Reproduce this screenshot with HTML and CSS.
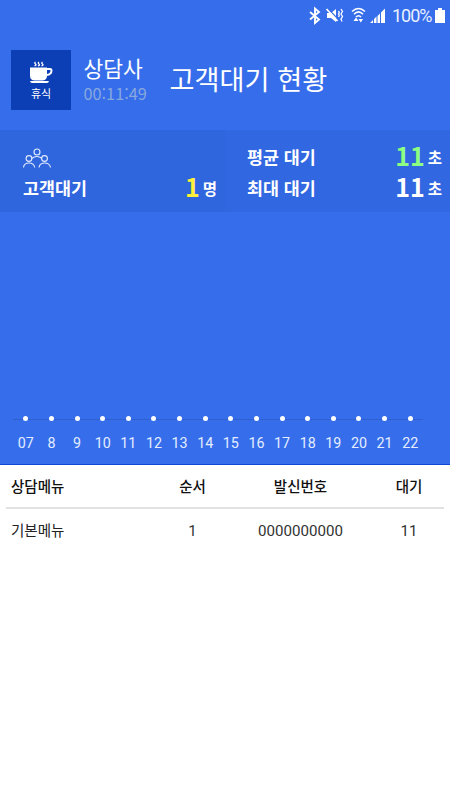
FILE: index.html
```html
<!DOCTYPE html>
<html lang="ko">
<head>
<meta charset="utf-8">
<title>고객대기 현황</title>
<link rel="stylesheet" href="styles.css">
</head>
<body>
<div class="statusbar">
  <svg class="status-icons" width="86" height="32" viewBox="0 0 86 32" fill="none" stroke="#fff">
    <path d="M2 12l9 7.500-4 3.500V8.500l4 3.500-9 7.500" stroke-width="1.900"/>
    <path d="M19 13h4l5-4v13l-5-4h-4z" fill="#fff" stroke="none"/>
    <path d="M19.500 8.500l12 12" stroke="#366dea" stroke-width="1.300"/>
    <path d="M18.500 9l11 12" stroke-width="1.800"/>
    <path d="M33 9l1.500 2.500-1.500 2.500 1.500 2.500-1.500 2.500 1 2.500M30.500 11l.8 1.500-.8 1.500.8 1.500-.8 1.500" stroke-width="1.300"/>
    <path d="M44 11.500q6.500-6 13 0M46 14.200q4.500-4.500 9 0M48 17q2.500-2.500 5 0" stroke-width="1.600"/>
    <path d="M45.500 21l2.500-3.500 2.500 3.500zM50.500 19h4.500l-2.200 3.500z" fill="#fff" stroke="none"/>
    <path d="M62 23l3-3v3zM66 23v-4l2.500-2.500V23zM69.500 23v-7l2.500-2.500V23zM73 23V12.500l4-4V23z" fill="#fff" stroke="none"/>
  </svg>
  <span class="percent">100%</span>
  <svg class="battery" width="10" height="15" viewBox="0 0 10 15"><path d="M3 0h4v2h3v13H0V2h3z" fill="#fff"/></svg>
</div>

<header class="header">
  <div class="rest">
    <svg width="24" height="23" viewBox="0 0 24 23" fill="none" stroke="#fff">
      <path d="M6.500 1q-1.500 1 0 2t-1 2M10 1q-1.500 1 0 2t-1 2M13.500 1q-1.500 1 0 2t-1 2" stroke-width="1.300"/>
      <path d="M1 6.500h17v8q0 5-5 5H6q-5 0-5-5zM1 20h19q-.5 2-2 2H3q-1.500 0-2-2z" fill="#fff" stroke="none"/>
      <path d="M17.500 8h3.500q1.500 0 1.500 1.500 0 4-5 4.500" stroke-width="2"/>
    </svg>
    <span>휴식</span>
  </div>
  <div class="agent">
    <div class="agent-name">상담사</div>
    <div class="agent-time">00:11:49</div>
  </div>
  <h1 class="title">고객대기 현황</h1>
</header>

<section class="summary">
  <div class="waiting">
    <svg width="28" height="20" viewBox="0 0 28 20" fill="none" stroke="#e3edff" stroke-width="1.100">
      <circle cx="14" cy="4" r="3"/><circle cx="6" cy="10.500" r="2.900"/><circle cx="21.500" cy="10.500" r="2.900"/>
      <path d="M8.500 10.500q5.500-4 10.500 0M.500 19.500q.500-4.500 5.500-4.500t5.700 4.500M16 19.500q.700-4.500 5.700-4.500T27.500 19.500"/>
    </svg>
    <div class="stat"><span>고객대기</span><span class="amount"><b class="yellow">1</b><span class="unit">명</span></span></div>
  </div>
  <div class="times">
    <div class="stat"><span>평균 대기</span><span class="amount"><b class="green">11</b><span class="unit">초</span></span></div>
    <div class="stat"><span>최대 대기</span><span class="amount"><b>11</b><span class="unit">초</span></span></div>
  </div>
</section>

<section class="chart">
  <div class="axis">
    <span>07</span><span>8</span><span>9</span><span>10</span><span>11</span><span>12</span><span>13</span><span>14</span><span>15</span><span>16</span><span>17</span><span>18</span><span>19</span><span>20</span><span>21</span><span>22</span>
  </div>
</section>

<section class="table">
  <div class="row head"><span>상담메뉴</span><span>순서</span><span>발신번호</span><span>대기</span></div>
  <div class="row"><span>기본메뉴</span><span class="num">1</span><span class="num">0000000000</span><span class="num">11</span></div>
</section>
</body>
</html>
```
FILE: styles.css
```css
* { box-sizing: border-box; }
body {
  margin: 0;
  width: 450px;
  height: 800px;
  overflow: hidden;
  background: #fff;
  color: #fff;
  font-family: "Noto Sans CJK KR", sans-serif;
}
.statusbar {
  display: flex;
  height: 32px;
  padding-left: 308px;
  background: #366dea;
}
.status-icons { flex: none; width: 86px; margin-right: -3px; }
.percent {
  width: 43px;
  padding-left: 1px;
  font: 18px/32px Roboto, sans-serif;
  letter-spacing: -1px;
  color: #e9f0ff;
}
.battery { flex: none; margin: 8px 0 0 1px; }
.header {
  display: flex;
  height: 98px;
  padding: 18px 0 0 11px;
  background: #366dea;
}
.rest {
  display: flex;
  flex-direction: column;
  align-items: center;
  width: 60px;
  height: 60px;
  padding-top: 11px;
  background: #0c3eb5;
  font-size: 11px;
  line-height: 18px;
}
.agent { width: 86px; margin-left: 12.500px; }
.agent-name { font-size: 21.5px; line-height: 32px; margin-top: 2px; }
.agent-time { font-size: 16.3px; line-height: 18px; color: #86a8de; }
.title {
  margin: 0;
  font-size: 27.2px;
  line-height: 56px;
  font-weight: 400;
}
.summary {
  display: flex;
  height: 82px;
  background: #3167e0;
  font-size: 17.4px;
  font-weight: 700;
}
.waiting { width: 225px; padding: 18px 8px 0 23px; background: #2f65dd; }
.waiting svg { display: block; }
.waiting .stat { margin-top: 4px; }
.times { flex: 1; padding: 11px 8px 0 22px; }
.stat {
  display: flex;
  justify-content: space-between;
  height: 31px;
  line-height: 31px;
}
.amount { display: flex; font-size: 15.5px; }
.amount b { margin-right: 3px; font-size: 25px; line-height: 28px; font-weight: 700; }
.unit { line-height: 33px; }
.yellow { color: #fff03c; }
.green { color: #8dff83; }
.chart {
  display: flex;
  align-items: flex-end;
  height: 253px;
  padding: 0 27px 12px 13px;
  background: #366dea;
  border-bottom: 1px solid #0d48d5;
}
.axis {
  display: grid;
  grid-template-columns: repeat(16, 1fr);
  width: 410px;
  height: 36px;
  background: linear-gradient(#315fd0, #315fd0) 0 3px / 100% 1px no-repeat;
  font: 14.3px/16px Roboto, sans-serif;
  color: #e3edff;
}
.axis span { display: flex; flex-direction: column; align-items: center; }
.axis span::before {
  content: "";
  width: 5px;
  height: 5px;
  margin-bottom: 14px;
  border-radius: 50%;
  background: #fff;
}
.table { padding: 0 6px; color: #222; font-size: 14.5px; }
.row {
  display: grid;
  grid-template-columns: 143px 87px 129px 88px;
  height: 44px;
  line-height: 42px;
  text-align: center;
}
.row span:first-child { padding-left: 5px; text-align: left; }
.head { color: #111; font-weight: 500; border-bottom: 2px solid #e2e2e2; }
.num { font: 15.1px/44px Roboto, sans-serif; color: #333; }
```
